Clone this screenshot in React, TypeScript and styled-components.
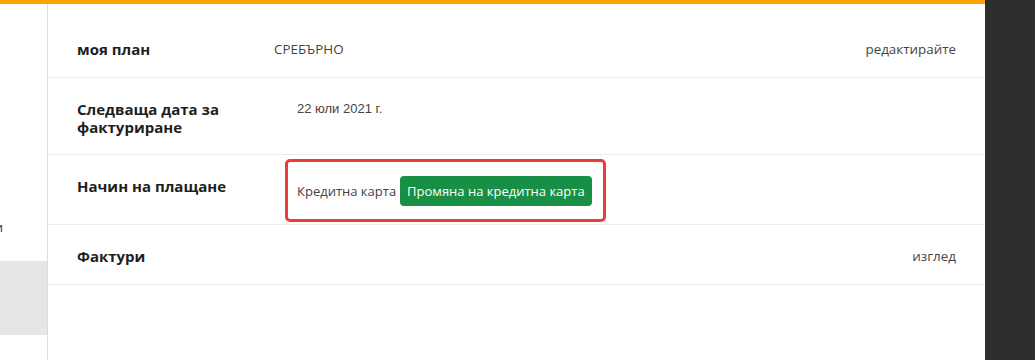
import React from "react";
import styled, { createGlobalStyle } from "styled-components";

const Global = createGlobalStyle`
  html, body { margin: 0; padding: 0; height: 360px; overflow: hidden; }
  body { font-family: "Open Sans", "Liberation Sans", sans-serif; background: #fff; }
  #root { height: 360px; }
`;

const Page = styled.div`
  display: flex;
  height: 360px;
  width: 1035px;
`;

const Frame = styled.div`
  width: 985px;
  display: flex;
  flex-direction: column;
  background: #fff;
`;

const TopBar = styled.div`
  height: 4px;
  background: #ffa500;
  flex: none;
`;

const Body = styled.div`
  flex: 1;
  display: flex;
`;

const Sidebar = styled.nav`
  width: 47px;
  border-right: 1px solid #dcdcdc;
  display: flex;
  flex-direction: column;
  padding-top: 209px;
  overflow: hidden;
`;

const NavItem = styled.div<{ $active?: boolean }>`
  height: ${(p) => (p.$active ? "74px" : "28px")};
  background: ${(p) => (p.$active ? "#e6e6e6" : "transparent")};
  display: flex;
  justify-content: flex-end;
  align-items: center;
  padding-right: 44px;
  white-space: nowrap;
  font-size: 13px;
  color: #333;
  margin-bottom: ${(p) => (p.$active ? "0" : "20px")};
`;

const Main = styled.main`
  flex: 1;
  padding-top: 14px;
`;

const Row = styled.div`
  display: grid;
  grid-template-columns: 197px 1fr auto;
  align-items: start;
  padding: 21px 29px 18px 29px;
  border-bottom: 1px solid #ececec;
`;

const Label = styled.div`
  font-size: 15px;
  font-weight: 700;
  line-height: 18px;
  padding-top: 1px;
  color: #1e1e1e;
  width: 150px;
`;

const Value = styled.div<{ $indent?: number; $arial?: boolean }>`
  display: flex;
  align-items: center;
  min-height: 20px;
  padding-left: ${(p) => p.$indent ?? 0}px;
  font-family: ${(p) => (p.$arial ? '"Liberation Sans", Arial, sans-serif' : '"Open Sans", sans-serif')};
  font-size: ${(p) => (p.$arial ? "13px" : "13.4px")};
  line-height: 20px;
  color: #444;
`;

const Highlight = styled.div`
  position: relative;
  display: flex;
  align-items: center;
  gap: 4px;
  &::after {
    content: "";
    position: absolute;
    top: -17px;
    left: -12px;
    right: -14px;
    bottom: -16px;
    border: 3px solid #ea3b3d;
    border-radius: 5px;
    pointer-events: none;
  }
`;

const Muted = styled.span`
  font-size: 13px;
  color: #444;
`;

const GreenButton = styled.button`
  border: none;
  background: #178f45;
  color: #fff;
  font-family: "Open Sans", sans-serif;
  font-size: 13px;
  line-height: 18px;
  height: 30px;
  padding: 0 7px;
  border-radius: 4px;
  cursor: pointer;
`;

const Action = styled.a`
  font-size: 13.4px;
  line-height: 20px;
  color: #444;
  text-decoration: none;
`;

const DarkPanel = styled.div`
  width: 50px;
  background: #2e2e2e;
`;

export default function App() {
  return (
    <>
      <Global />
      <Page>
        <Frame>
          <TopBar />
          <Body>
            <Sidebar>
              <NavItem>Абонаменти</NavItem>
              <NavItem $active />
            </Sidebar>
            <Main>
              <Row>
                <Label>моя план</Label>
                <Value>СРЕБЪРНО</Value>
                <Action>редактирайте</Action>
              </Row>
              <Row>
                <Label>Следваща дата за фактуриране</Label>
                <Value $indent={23} $arial>22 юли 2021 г.</Value>
                <span />
              </Row>
              <Row>
                <Label>Начин на плащане</Label>
                <Value $indent={23}>
                  <Highlight>
                    <Muted>Кредитна карта</Muted>
                    <GreenButton>Промяна на кредитна карта</GreenButton>
                  </Highlight>
                </Value>
                <span />
              </Row>
              <Row>
                <Label>Фактури</Label>
                <Value />
                <Action>изглед</Action>
              </Row>
            </Main>
          </Body>
        </Frame>
        <DarkPanel />
      </Page>
    </>
  );
}
